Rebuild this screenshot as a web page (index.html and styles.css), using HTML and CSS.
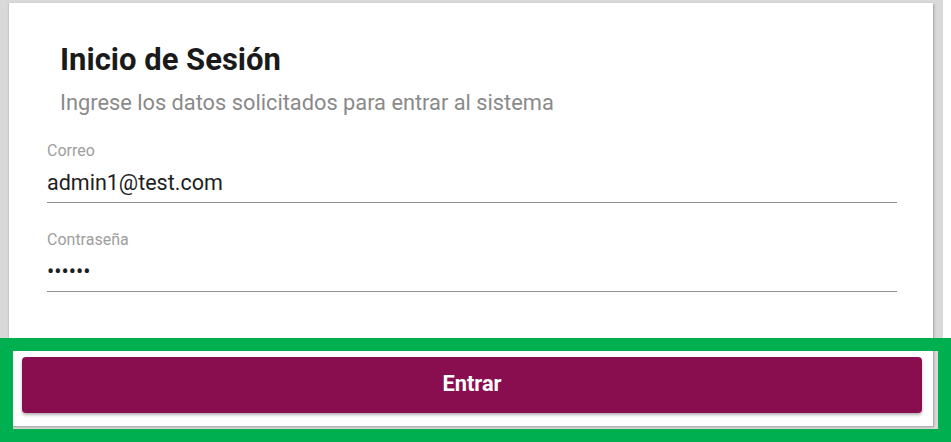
FILE: index.html
```html
<!DOCTYPE html>
<html lang="es">
<head>
<meta charset="utf-8">
<title>Inicio de Sesión</title>
<link rel="stylesheet" href="styles.css">
</head>
<body>
<div class="page">
  <div class="card">
    <div class="header">
      <h1 class="title">Inicio de Sesión</h1>
      <p class="subtitle">Ingrese los datos solicitados para entrar al sistema</p>
    </div>
    <form class="form">
      <label class="field">
        <span class="field-label">Correo</span>
        <input class="field-input" type="email" value="admin1@test.com">
      </label>
      <label class="field field-second">
        <span class="field-label">Contraseña</span>
        <input class="field-input field-password" type="password" value="123456">
      </label>
    </form>
    <div class="actions">
      <button class="btn" type="button">Entrar</button>
    </div>
  </div>
  <div class="highlight"></div>
</div>
</body>
</html>
```

FILE: styles.css
```css
* { box-sizing: border-box; }
html, body { margin: 0; padding: 0; background: #ffffff; }
body { font-family: Roboto, "Noto Sans", "Liberation Sans", sans-serif; width: 951px; height: 442px; overflow: hidden; }

.page {
  position: relative;
  width: 943px;
  height: 442px;
  background: #d9d9d9;
  padding: 3px 0 0 8px;
}

.card {
  width: 925px;
  height: 423px;
  background: #ffffff;
  border-left: 1px solid #c6c6c6;
  box-shadow: 1px 1px 2px rgba(0,0,0,0.28);
  display: flex;
  flex-direction: column;
}

.header { padding: 39px 0 0 51px; }
.title {
  margin: 0;
  font-size: 31px;
  line-height: 36px;
  font-weight: 700;
  color: #1a1a1a;
}
.subtitle {
  margin: 12px 0 0;
  font-size: 21.8px;
  line-height: 26px;
  color: #8a8a8a;
}

.form { padding: 0 36px 0 38px; margin-top: 26px; display: flex; flex-direction: column; }
.field { display: flex; flex-direction: column; }
.field-second { margin-top: 28px; }
.field-label {
  font-size: 16px;
  line-height: 18px;
  color: #9e9e9e;
}
.field-input {
  margin-top: 9px;
  border: 0;
  border-bottom: 1px solid #8f8f8f;
  padding: 0 0 7px;
  height: 34px;
  font-family: Roboto, "Noto Sans", sans-serif;
  font-size: 21.5px;
  line-height: 26px;
  color: #1e1e1e;
  background: transparent;
  outline: none;
}

.actions { margin-top: auto; padding: 0 11px 13px 13px; }
.btn {
  width: 100%;
  height: 56px;
  border: 0;
  border-radius: 4px;
  background: #880e4f;
  color: #ffffff;
  padding: 0 0 3px;
  font-family: Roboto, "Noto Sans", sans-serif;
  font-size: 21.8px;
  font-weight: 700;
  box-shadow: 0 2px 3px rgba(0,0,0,0.3);
}

.highlight {
  position: absolute;
  left: 0;
  top: 338px;
  width: 951px;
  height: 104px;
  border: 13px solid #00b050;
}
```
